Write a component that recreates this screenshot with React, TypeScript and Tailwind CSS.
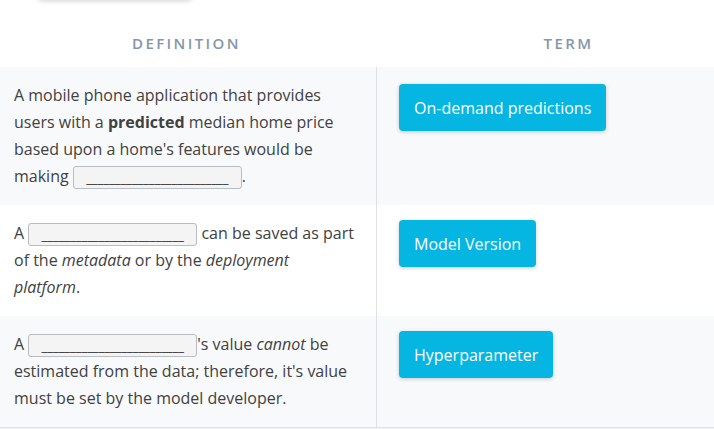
const rows = [
  { term: "On-demand predictions", shade: true, kind: 1 },
  { term: "Model Version", shade: false, kind: 2 },
  { term: "Hyperparameter", shade: true, kind: 3 },
];

function Blank() {
  return (
    <span className="inline-flex h-[23px] w-[169px] items-end justify-center overflow-hidden whitespace-nowrap rounded-[3px] border border-[#b9bcc0] bg-[#f4f4f4] pb-[3px] align-middle text-[13px] leading-none text-[#222]">
      _________________________
    </span>
  );
}

function Definition({ kind }: { kind: number }) {
  if (kind === 1) {
    return (
      <>
        A mobile phone application that provides users with a <b className="font-bold">predicted</b> median home price based
        upon a home's features would be making <Blank />.
      </>
    );
  }
  if (kind === 2) {
    return (
      <>
        A <Blank /> can be saved as part of the <i>metadata</i> or by the <i>deployment platform</i>.
      </>
    );
  }
  return (
    <>
      A <Blank />'s value <i>cannot</i> be estimated from the data; therefore, it's value must be set by the model developer.
    </>
  );
}

export default function App() {
  return (
    <div className="h-[429px] w-[714px] overflow-hidden bg-white font-['Open_Sans',sans-serif]">
      <div className="ml-[37px] -mt-[40px] h-[40px] w-[156px] rounded-md bg-white shadow-[0_1px_5px_rgba(0,0,0,0.18)]" />
      <div className="grid h-[67px] grid-cols-[377px_1fr] items-end pb-[14px]">
        <div className="pr-[4px] text-center text-[15px] font-semibold leading-[20px] tracking-[2.4px] text-[#8496aa]">DEFINITION</div>
        <div className="pl-[46px] text-center text-[15px] font-semibold leading-[20px] tracking-[2.4px] text-[#8496aa]">TERM</div>
      </div>
      <div className="border-b border-[#e1e4e8]">
        {rows.map((row) => (
          <div
            key={row.term}
            className={`grid grid-cols-[377px_1fr] ${row.shade ? "bg-[#f8f9fb]" : "bg-white"}`}
          >
            <div className="border-r border-[#dde0e4] py-[15px] pl-[14px] pr-[18px] text-[16px] leading-[27px] text-[#414141]">
              <Definition kind={row.kind} />
            </div>
            <div className={`pl-[22px] ${row.kind === 1 ? "pt-[17px]" : "pt-[15px]"}`}>
              <div className="inline-flex h-[47px] items-center rounded-[4px] bg-[#05b5e2] px-[15px] text-[16px] text-white shadow-[0_1px_4px_rgba(0,0,0,0.2)]">
                {row.term}
              </div>
            </div>
          </div>
        ))}
      </div>
      <div className="h-[2px] bg-[#eef0f3]" />
    </div>
  );
}
